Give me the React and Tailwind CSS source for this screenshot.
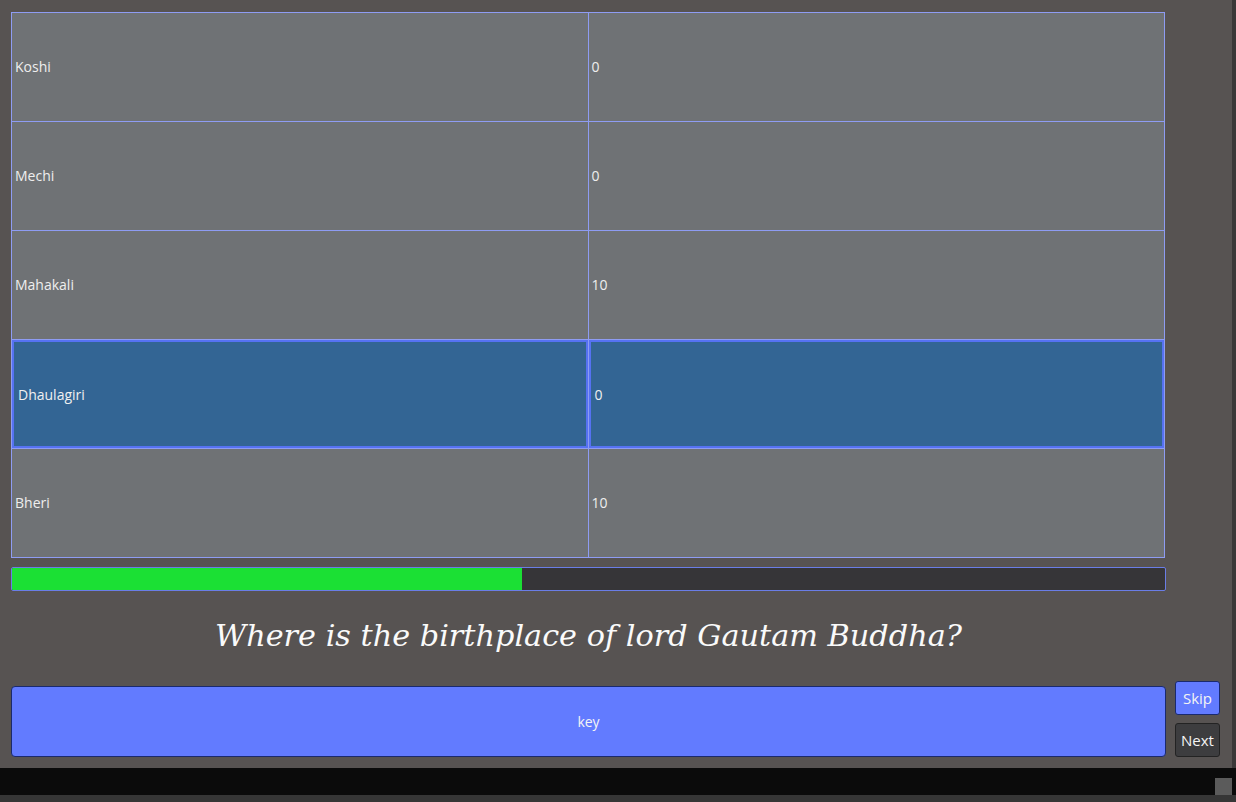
import React from "react";

const rows = [
  { name: "Koshi", score: "0" },
  { name: "Mechi", score: "0" },
  { name: "Mahakali", score: "10" },
  { name: "Dhaulagiri", score: "0", active: true },
  { name: "Bheri", score: "10" },
];

function Cell({ children, active, last }) {
  return (
    <div
      className={`flex-1 h-full ${last ? "" : "border-r border-[#8e9cf3]"} ${
        active ? "p-0" : "bg-[#6f7275]"
      }`}
    >
      {active ? (
        <div className="h-full flex items-center border-2 border-[#5672f2] bg-[#336594] pl-[4px] text-[#f0f0f0]">
          {children}
        </div>
      ) : (
        <div className="h-full flex items-center pl-[3px] pb-[1px] text-[#eeeeee]">{children}</div>
      )}
    </div>
  );
}

export default function App() {
  return (
    <div
      className="w-[1236px] h-[802px] flex flex-col bg-[#575352] overflow-hidden"
      style={{ fontFamily: '"Open Sans", "Noto Sans", sans-serif' }}
    >
      <div className="flex h-[768px]">
        <div className="w-[1232px] flex flex-col pt-[12px] pl-[11px] pr-[11px]">
          {/* scores table */}
          <div className="w-[1154px] border border-[#8e9cf3] text-[14px] bg-[#6f7275]">
            {rows.map((r, i) => (
              <div
                key={r.name}
                className={
                  i < rows.length - 1
                    ? "flex h-[109px] border-b border-[#8e9cf3]"
                    : "flex h-[108px]"
                }
              >
                <Cell active={r.active}>{r.name}</Cell>
                <Cell active={r.active} last>
                  {r.score}
                </Cell>
              </div>
            ))}
          </div>

          {/* progress */}
          <div className="mt-[9px] w-[1155px] h-[24px] border border-[#6a7de6] rounded-[2px] bg-[#363538] overflow-hidden">
            <div className="h-full w-[44.2%] bg-[#1be034]" />
          </div>

          {/* question */}
          <div className="h-[90px] flex items-center justify-center w-[1155px]">
            <p
              className="italic text-[30.3px] text-[#fafafa]"
              style={{ fontFamily: '"DejaVu Serif", "Liberation Serif", serif' }}
            >
              Where is the birthplace of lord Gautam Buddha?
            </p>
          </div>

          {/* answer row */}
          <div className="flex items-end gap-[9px]">
            <button className="w-[1155px] h-[71px] rounded-[4px] border border-[#1a2a6e] bg-[#627bff] text-[14px] text-[#f4f4f4]">
              key
            </button>
            <div className="flex flex-col gap-[8px]">
              <button className="w-[45px] h-[34px] rounded-[3px] border border-[#1a2a6e] bg-[#627bff] text-[15px] text-[#f4f4f4]">
                Skip
              </button>
              <button className="w-[45px] h-[34px] rounded-[3px] border border-[#232323] bg-[#3d3d3f] text-[15px] text-[#f4f4f4]">
                Next
              </button>
            </div>
          </div>
        </div>
        <div className="w-[4px] bg-[#3a3838]" />
      </div>

      <div className="h-[27px] bg-[#0b0b0b] flex justify-end items-end pr-[4px]">
        <div className="w-[17px] h-[17px] bg-[#5b5b5b]" />
      </div>
      <div className="h-[7px] bg-[#363636]" />
    </div>
  );
}
